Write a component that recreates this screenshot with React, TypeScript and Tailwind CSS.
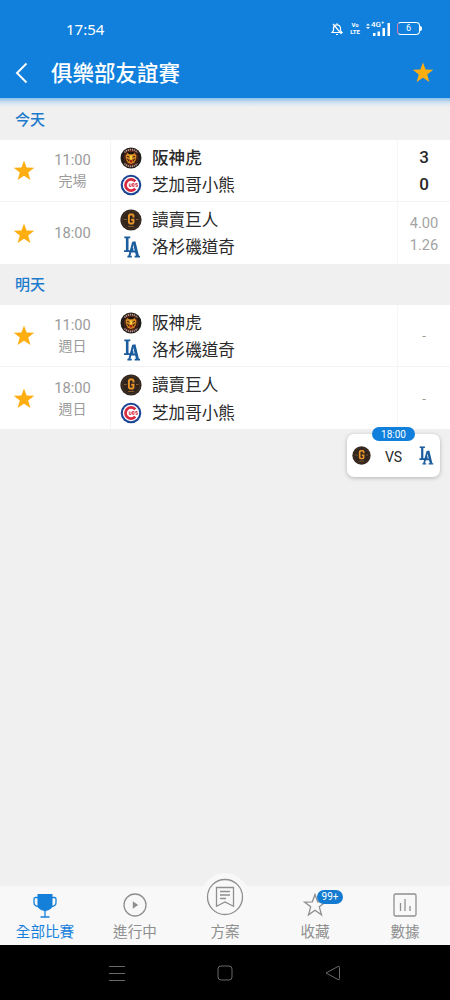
import type { ReactNode } from "react";

type Team = "tigers" | "cubs" | "giants" | "dodgers";

interface Match {
  time: string;
  note?: string;
  home: Team;
  away: Team;
  winner?: boolean;
  scores?: [string, string];
  odds?: [string, string];
}

const names: Record<Team, string> = {
  tigers: "阪神虎",
  cubs: "芝加哥小熊",
  giants: "讀賣巨人",
  dodgers: "洛杉磯道奇",
};

const today: Match[] = [
  { time: "11:00", note: "完場", home: "tigers", away: "cubs", winner: true, scores: ["3", "0"] },
  { time: "18:00", home: "giants", away: "dodgers", odds: ["4.00", "1.26"] },
];

const tomorrow: Match[] = [
  { time: "11:00", note: "週日", home: "tigers", away: "dodgers" },
  { time: "18:00", note: "週日", home: "giants", away: "cubs" },
];

function Star() {
  return (
    <svg width="22" height="22" viewBox="0 0 22 22">
      <path
        d="M11 .5l2.6 7.1 7.7.2-6.1 4.7 2.2 7.5L11 15.7l-6.4 4.3 2.2-7.5L.7 7.8l7.7-.2z"
        fill="#ffae12"
      />
    </svg>
  );
}

function Logo({ team, size = 22 }: { team: Team; size?: number }) {
  if (team === "tigers") {
    return (
      <svg width={size} height={size} viewBox="0 0 22 22">
        <circle cx="11" cy="11" r="10.5" fill="#211d1b" />
        <path
          d="M4.5 5.5A8.7 8.7 0 0 1 17.5 5.5M4.5 16.5A8.7 8.7 0 0 0 17.5 16.5"
          fill="none"
          stroke="#c9988a"
          strokeWidth="1.7"
          strokeDasharray="1.3 .7"
        />
        <circle cx="11" cy="11" r="6.8" fill="#171310" stroke="#8c2b17" strokeWidth=".7" />
        <path d="M5.5 8.5l2-2.5 1.7 1.2h3.6L14.5 6l2 2.5-.3 4-2 3.5L11 17l-3.2-1-2-3.5z" fill="#d98a22" />
        <path d="M7 9.3l2.7 1M15 9.3l-2.7 1M6.5 12l2 .5m7-.5l-2 .5M8 14.5l1-2M14 14.5l-1-2" stroke="#3a1d0d" strokeWidth="1" />
        <path d="M9.3 13h3.4l-.6 2.4H9.9z" fill="#a92619" />
        <path d="M9.5 8.5h3l-.5 4h-2z" fill="#f1cf3f" />
      </svg>
    );
  }
  if (team === "cubs") {
    return (
      <svg width={size} height={size} viewBox="0 0 22 22">
        <circle cx="11" cy="11" r="10.3" fill="#1c4694" />
        <circle cx="11" cy="11" r="8.2" fill="#fff" />
        <path d="M15.3 7.3A5.6 5.6 0 1 0 15.3 14.7" fill="none" stroke="#d82b42" strokeWidth="2.7" />
        <path
          d="M9.3 9.5v2.9h1.8V9.5m1.5 0v2.9h1.4V9.5h-1.4m4.8 0h-1.7v1.4h1.7v1.5h-1.8"
          fill="none"
          stroke="#d82b42"
          strokeWidth=".9"
        />
      </svg>
    );
  }
  if (team === "giants") {
    return (
      <svg width={size} height={size} viewBox="0 0 22 22">
        <circle cx="11" cy="11" r="10.6" fill="#32251d" />
        <circle cx="11" cy="11" r="9" fill="none" stroke="#4e3b2b" strokeWidth=".6" />
        <path d="M13.5 8.5V6.5l-.8-1H9.8l-.9 1v7l.9 1h2.9l.8-1v-2.8h-2.3" fill="none" stroke="#e7952b" strokeWidth="1.9" />
        <path d="M3.8 10.5h3M16 10.5h2.5M8 17.5h6" stroke="#9b6930" strokeWidth=".8" />
      </svg>
    );
  }
  return (
    <svg width={size} height={size} viewBox="0 0 22 22" fill="none" stroke="#1b5c9c">
      <path d="M4.3 1.4h6M4 15.2h8.5v-3.4" strokeWidth="1.8" />
      <path d="M7.2 1v14" strokeWidth="2.6" />
      <path d="M9.2 20.5L13.2 6" strokeWidth="2" />
      <path d="M14 5.5l3.6 15" strokeWidth="2.9" />
      <path d="M11 15.5h5.5" strokeWidth="2" />
      <path d="M7.4 20.7h4.4M14.6 20.7h5.4" strokeWidth="1.7" />
    </svg>
  );
}

function StatusBar() {
  return (
    <div className="flex h-12 items-center justify-between pt-[9px] pr-[28px] pl-[66px] text-white">
      <span className="font-['Noto_Sans'] text-[15px] leading-5">17:54</span>
      <div className="flex items-center">
        <svg width="12" height="14" viewBox="0 0 12 14" fill="none" stroke="#fff" strokeWidth="1.2">
          <path d="M1 10.5h10l-1.5-2V6.3A3.5 3.5 0 0 0 6 2.8 3.5 3.5 0 0 0 2.5 6.3v2.2zM5 12.5h2M6 1.2v1.5M2 2l8.5 10" />
        </svg>
        <div className="ml-[7px] flex w-[10px] flex-col items-center font-['Roboto'] text-[6px] leading-[8px] font-bold">
          <div>Vo</div>
          <div className="-mt-px">LTE</div>
        </div>
        <div className="relative ml-[6px] h-[14px] w-6">
          <svg width="24" height="14" viewBox="0 0 24 14" fill="#fff">
            <path d="M0 3.5l2-2 2 2zM0 5l2 2 2-2zM7 11h2.5v3H7zM11.5 9.5H14V14h-2.500zM16.500 6H19v8h-2.500zM21.500 1H24v13h-2.500z" />
          </svg>
          <span className="absolute -top-px left-[5px] font-['Roboto'] text-[8px] leading-[8px] font-medium">4G⁺</span>
        </div>
        <div className="ml-[7px] flex h-[13px] w-[23px] items-center justify-center rounded-[4px] border border-white border-l-[#db79a9] font-['Roboto'] text-[9px] leading-none">
          6
        </div>
        <div className="h-[5px] w-[2px] rounded-r-sm bg-white" />
      </div>
    </div>
  );
}

function MatchRow({ match }: { match: Match }) {
  return (
    <div className="flex h-[62.3px] border-b border-[#f4f4f4] bg-white last:border-b-0">
      <div className="flex w-12 items-center justify-center pt-px">
        <Star />
      </div>
      <div className="flex w-[63px] flex-col items-center justify-center border-r border-[#f3f3f3] pt-px pr-[13px] text-[#9b9b9b]">
        <span className="text-[14.7px] leading-[21px]">{match.time}</span>
        {match.note && <span className="text-[14px] leading-[20px]">{match.note}</span>}
      </div>
      <div className="flex flex-1 flex-col pt-1 pl-[9px] text-[16.6px] leading-[27px] text-[#292929]">
        <div className="flex items-center gap-[10px]">
          <Logo team={match.home} />
          <span className={match.winner ? "pt-px font-medium" : "pt-px"}>{names[match.home]}</span>
        </div>
        <div className="-mt-[0.5px] flex items-center gap-[10px]">
          <Logo team={match.away} />
          <span className="pt-px">{names[match.away]}</span>
        </div>
      </div>
      <div className="flex w-[53px] flex-col items-center justify-center border-l border-[#f6f6f6] pt-px">
        {match.scores?.map((score, i) => (
          <span key={i} className="text-[17px] leading-[27px] font-medium text-[#292929]">
            {score}
          </span>
        ))}
        {match.odds?.map((odd, i) => (
          <span key={i} className="text-[14.7px] leading-[22px] text-[#a3a3a3]">
            {odd}
          </span>
        ))}
        {!match.scores && !match.odds && <span className="text-[13px] leading-5 text-[#999]">-</span>}
      </div>
    </div>
  );
}

function Section({ title, matches }: { title: string; matches: Match[] }) {
  return (
    <section>
      <h2 className="flex h-[40.6px] items-center pt-[2px] pl-[15px] text-[15px] font-medium text-[#1c7bcb]">{title}</h2>
      {matches.map((match, i) => (
        <MatchRow key={i} match={match} />
      ))}
    </section>
  );
}

function Tab({ label, active, children }: { label: string; active?: boolean; children: ReactNode }) {
  return (
    <div className={active ? "flex flex-1 flex-col items-center text-[#1480da]" : "flex flex-1 flex-col items-center text-[#8f8f8f]"}>
      <div className="flex h-[35px] items-center pt-[3px]">{children}</div>
      <span className="text-[14.6px] leading-[22px]">{label}</span>
    </div>
  );
}

export default function App() {
  return (
    <div className="flex h-[1000px] w-[450px] flex-col overflow-hidden bg-[#f0f0f0] font-['Roboto','Noto_Sans_CJK_TC',sans-serif]">
      <header className="h-[98px] shrink-0 bg-[#1080dc]">
        <StatusBar />
        <div className="flex h-[50px] items-center pr-[16px] pl-[15px] text-white">
          <svg width="13" height="22" viewBox="0 0 13 22" fill="none" stroke="#fff" strokeWidth="1.9">
            <path d="M11.5 1.5L2 11l9.5 9.5" />
          </svg>
          <h1 className="ml-[23px] flex-1 pt-[2px] text-[21.5px] leading-8 font-medium">俱樂部友誼賽</h1>
          <Star />
        </div>
      </header>

      <main className="relative flex-1">
        <div className="absolute inset-x-0 top-0 h-[9px] bg-linear-to-b from-[#8cbfeb] via-[#d1e2f0] to-[#f0f0f0]" />
        <div className="relative pt-px">
          <Section title="今天" matches={today} />
          <Section title="明天" matches={tomorrow} />
        </div>

        <div className="absolute top-[336px] right-[10px] flex h-[43px] w-[93px] items-center justify-between rounded-[7px] bg-white pr-[5px] pl-[5px] shadow-[0_1px_4px_rgba(0,0,0,0.25)]">
          <Logo team="giants" size={19} />
          <span className="pt-[3px] text-[14px] text-[#292929]">VS</span>
          <Logo team="dodgers" size={19} />
          <span className="absolute -top-[7px] left-[25px] flex h-[14px] w-[43px] items-center justify-center rounded-full bg-[#1080dc] pt-px text-[10px] leading-none text-white">
            18:00
          </span>
        </div>
      </main>

      <nav className="relative flex h-[59px] shrink-0 bg-[#f8f8f8]">
        <div className="absolute -top-[13px] left-[201px] size-12 rounded-full bg-[#f8f8f8]" />
        <Tab label="全部比賽" active>
          <svg width="24" height="25" viewBox="0 0 24 25" fill="none" stroke="currentColor" strokeWidth="1.3">
            <path d="M4.5 1h15v11.5c0 3-3 4.5-7.5 5.8-4.5-1.3-7.5-2.8-7.5-5.8z" fill="currentColor" stroke="none" />
            <path d="M5 4.5H2.5q-1.5 0-1.5 1.5v3.5c0 2.5 1.5 3.8 4.5 4M19 4.5h2.5q1.5 0 1.5 1.5v3.5c0 2.5-1.5 3.8-4.5 4M12 17v6.5M7.5 24h9" />
          </svg>
        </Tab>
        <Tab label="進行中">
          <svg width="24" height="24" viewBox="0 0 24 24" fill="none" stroke="currentColor" strokeWidth="1.3">
            <circle cx="12" cy="12" r="11" />
            <path d="M9.8 8.3v7.4l5.4-3.7z" fill="currentColor" stroke="none" />
          </svg>
        </Tab>
        <Tab label="方案">
          <svg
            className="relative -top-2 shrink-0"
            width="38"
            height="38"
            viewBox="0 0 38 38"
            fill="none"
            stroke="currentColor"
            strokeWidth="1.3"
          >
            <circle cx="19" cy="19" r="17.5" />
            <path d="M10.5 9.5h17v18.8L19 24l-8.5 4.3zM14 13.5h10M14 17h10M14 20.5h6" />
          </svg>
        </Tab>
        <Tab label="收藏">
          <div className="relative">
            <svg width="24" height="24" viewBox="0 0 24 24" fill="none" stroke="currentColor" strokeWidth="1.3">
              <path d="M12 1.5l2.7 7.3 7.8.2-6.2 4.8 2.2 8-6.5-4.6-6.5 4.6 2.2-8L1.5 9l7.8-.2z" />
            </svg>
            <span className="absolute -top-[3px] left-[14px] flex h-[14px] w-[26px] items-center justify-center rounded-full bg-[#147bd1] text-[10px] leading-none text-white">
              99+
            </span>
          </div>
        </Tab>
        <Tab label="數據">
          <svg width="24" height="24" viewBox="0 0 24 24" fill="none" stroke="currentColor" strokeWidth="1.3">
            <rect x="1" y="1" width="22" height="22" rx="1.5" />
            <path d="M7.5 10v8M12 6v12M17 13v5" />
          </svg>
        </Tab>
      </nav>

      <footer className="flex h-[55px] shrink-0 items-center bg-black pl-[109px]">
        <svg width="16" height="16" viewBox="0 0 16 16" fill="none" stroke="#696969">
          <path d="M0 1.5h16M0 8.5h16M0 15.5h16" />
        </svg>
        <svg className="ml-[92px]" width="16" height="16" viewBox="0 0 16 16" fill="none" stroke="#696969">
          <rect x="1" y="1" width="14" height="14" rx="3" />
        </svg>
        <svg className="ml-[92px]" width="16" height="16" viewBox="0 0 16 16" fill="none" stroke="#696969" strokeLinejoin="round">
          <path d="M1 8l12-6.5q1.5-.5 1.5 1v11q0 1.5-1.5 1z" />
        </svg>
      </footer>
    </div>
  );
}
